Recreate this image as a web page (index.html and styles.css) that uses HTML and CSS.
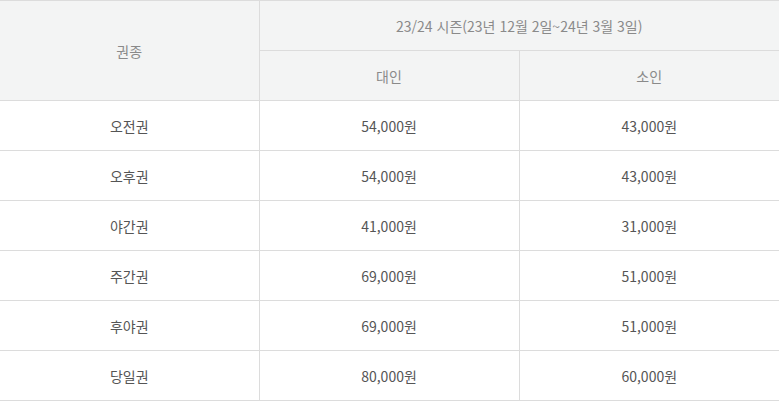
FILE: index.html
```html
<!DOCTYPE html>
<html lang="ko">
<head>
<meta charset="utf-8">
<link rel="stylesheet" href="styles.css">
</head>
<body>
<table class="price">
  <colgroup><col class="c1"><col class="c2"><col class="c3"></colgroup>
  <thead>
    <tr>
      <th rowspan="2" class="first">권종</th>
      <th colspan="2">23/24 시즌(23년 12월 2일~24년 3월 3일)</th>
    </tr>
    <tr>
      <th>대인</th>
      <th>소인</th>
    </tr>
  </thead>
  <tbody>
    <tr><td class="first">오전권</td><td>54,000원</td><td>43,000원</td></tr>
    <tr><td class="first">오후권</td><td>54,000원</td><td>43,000원</td></tr>
    <tr><td class="first">야간권</td><td>41,000원</td><td>31,000원</td></tr>
    <tr><td class="first">주간권</td><td>69,000원</td><td>51,000원</td></tr>
    <tr><td class="first">후야권</td><td>69,000원</td><td>51,000원</td></tr>
    <tr><td class="first">당일권</td><td>80,000원</td><td>60,000원</td></tr>
  </tbody>
</table>
</body>
</html>
```

FILE: styles.css
```css
html, body {
  margin: 0;
  padding: 0;
  background: #fff;
}
.price {
  width: 779px;
  border-collapse: collapse;
  table-layout: fixed;
  font-family: "Noto Sans CJK KR", "Noto Sans", sans-serif;
  font-size: 14px;
}
.price .c1 { width: 259px; }
.price .c2 { width: 260px; }
.price th,
.price td {
  height: 49px;
  padding: 0;
  text-align: center;
  vertical-align: middle;
  border: 1px solid #dcdcdc;
  font-weight: normal;
}
.price th {
  background: #f3f4f4;
  color: #8a8a8a;
}
.price td {
  color: #555;
}
.price .first {
  border-left: none;
}
.price tr > :last-child {
  border-right: none;
}
```
